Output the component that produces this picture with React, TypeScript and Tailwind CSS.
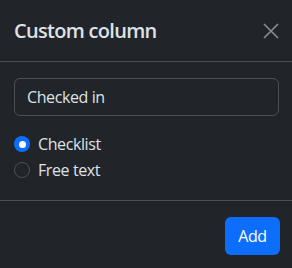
import React from "react";

export default function App() {
  return (
    <div
      className="w-[292px] h-[268px] bg-[#212529] text-[#dee2e6] flex flex-col overflow-hidden"
      style={{ fontFamily: '"Open Sans", "Noto Sans", sans-serif' }}
    >
      <div className="h-[62px] border-b border-[#495057] flex items-center justify-between pl-[14px] pr-[13px] shrink-0">
        <div className="text-[20px] font-semibold leading-none tracking-[-0.7px]">Custom column</div>
        <button className="w-[16px] h-[16px] flex items-center justify-center text-[#8a8d90]">
          <svg width="16" height="16" viewBox="0 0 16 16" fill="none" stroke="currentColor" strokeWidth="1.6">
            <path d="M1 1 L15 15 M15 1 L1 15" />
          </svg>
        </button>
      </div>
      <div className="pt-4 pb-4 pl-[14px] pr-[13px] border-b border-[#495057] shrink-0 tracking-[-0.4px]">
        <div className="h-[38px] rounded-md border border-[#495057] flex items-center px-3 text-[16px]">
          Checked in
        </div>
        <div className="mt-4 flex flex-col gap-[2px]">
          <label className="h-[24px] flex items-center gap-2 text-[16px]">
            <span className="w-4 h-4 rounded-full bg-[#0d6efd] flex items-center justify-center">
              <span className="w-[7px] h-[7px] rounded-full bg-white" />
            </span>
            Checklist
          </label>
          <label className="h-[24px] flex items-center gap-2 text-[16px]">
            <span className="w-4 h-4 rounded-full border border-[#495057]" />
            Free text
          </label>
        </div>
        <div className="h-[2px]" />
      </div>
      <div className="flex justify-end pt-4 pr-[12px]">
        <button className="h-[38px] w-[55px] rounded-md bg-[#0d6efd] text-white text-[16px] tracking-[-0.4px]">Add</button>
      </div>
    </div>
  );
}
